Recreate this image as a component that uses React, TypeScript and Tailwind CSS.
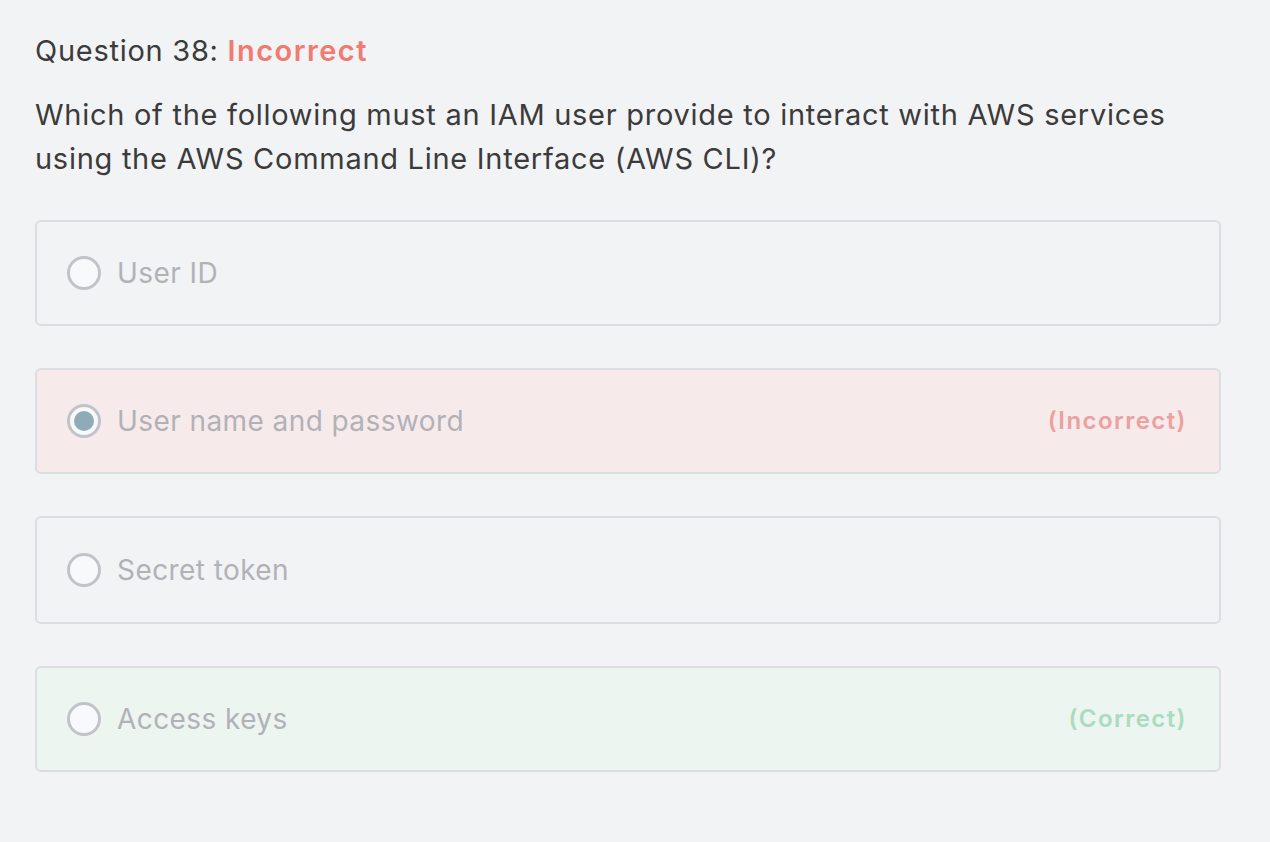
import React from "react";

type Option = {
  label: string;
  selected?: boolean;
  state?: "correct" | "incorrect";
  tall?: boolean;
};

const options: Option[] = [
  { label: "User ID" },
  { label: "User name and password", selected: true, state: "incorrect" },
  { label: "Secret token", tall: true },
  { label: "Access keys", state: "correct" },
];

function Radio({ selected }: { selected?: boolean }) {
  return (
    <span className="w-[34px] h-[34px] rounded-full border-[3px] border-[#c1c3c9] bg-[#f8f9fb] flex items-center justify-center shrink-0">
      {selected && <span className="w-[20px] h-[20px] rounded-full bg-[#8fabb8]" />}
    </span>
  );
}

export default function App() {
  return (
    <div
      className="min-h-[842px] bg-[#f2f3f5] px-[35px] pt-[31px] pb-10"
      style={{ fontFamily: "Inter, 'Noto Sans', sans-serif" }}
    >
      <div className="w-[1186px]">
        {/* Header */}
        <h2 className="text-[29px] leading-[40px] tracking-[0.025em] text-[#3b3b3b]">
          Question 38:{" "}
          <span className="font-semibold tracking-[0.05em] text-[#ef7b73]">Incorrect</span>
        </h2>

        <p className="mt-[22px] text-[29px] leading-[44px] tracking-[0.025em] text-[#3b3b3b]">
          Which of the following must an IAM user provide to interact with AWS services using the AWS
          Command Line Interface (AWS CLI)?
        </p>

        {/* Answers */}
        <div className="mt-[39px] flex flex-col gap-[42px]">
          {options.map((o) => {
            const bg =
              o.state === "incorrect"
                ? "bg-[#f7eaeb]"
                : o.state === "correct"
                ? "bg-[#ecf5f0]"
                : "bg-[#f2f3f5]";
            return (
              <div
                key={o.label}
                className={`${o.tall ? "h-[108px]" : "h-[106px]"} rounded-[6px] border-2 border-[#dcdde0] ${bg} flex items-center pl-[30px] pr-[32px]`}
              >
                <Radio selected={o.selected} />
                <span className="ml-[16px] text-[28px] tracking-[0.015em] text-[#b1b2b7] flex-1">
                  {o.label}
                </span>
                {o.state === "incorrect" && (
                  <span className="text-[24px] font-semibold tracking-[0.06em] text-[#eba19f]">
                    (Incorrect)
                  </span>
                )}
                {o.state === "correct" && (
                  <span className="text-[24px] font-semibold tracking-[0.06em] text-[#a9dcc0]">
                    (Correct)
                  </span>
                )}
              </div>
            );
          })}
        </div>
      </div>
    </div>
  );
}
